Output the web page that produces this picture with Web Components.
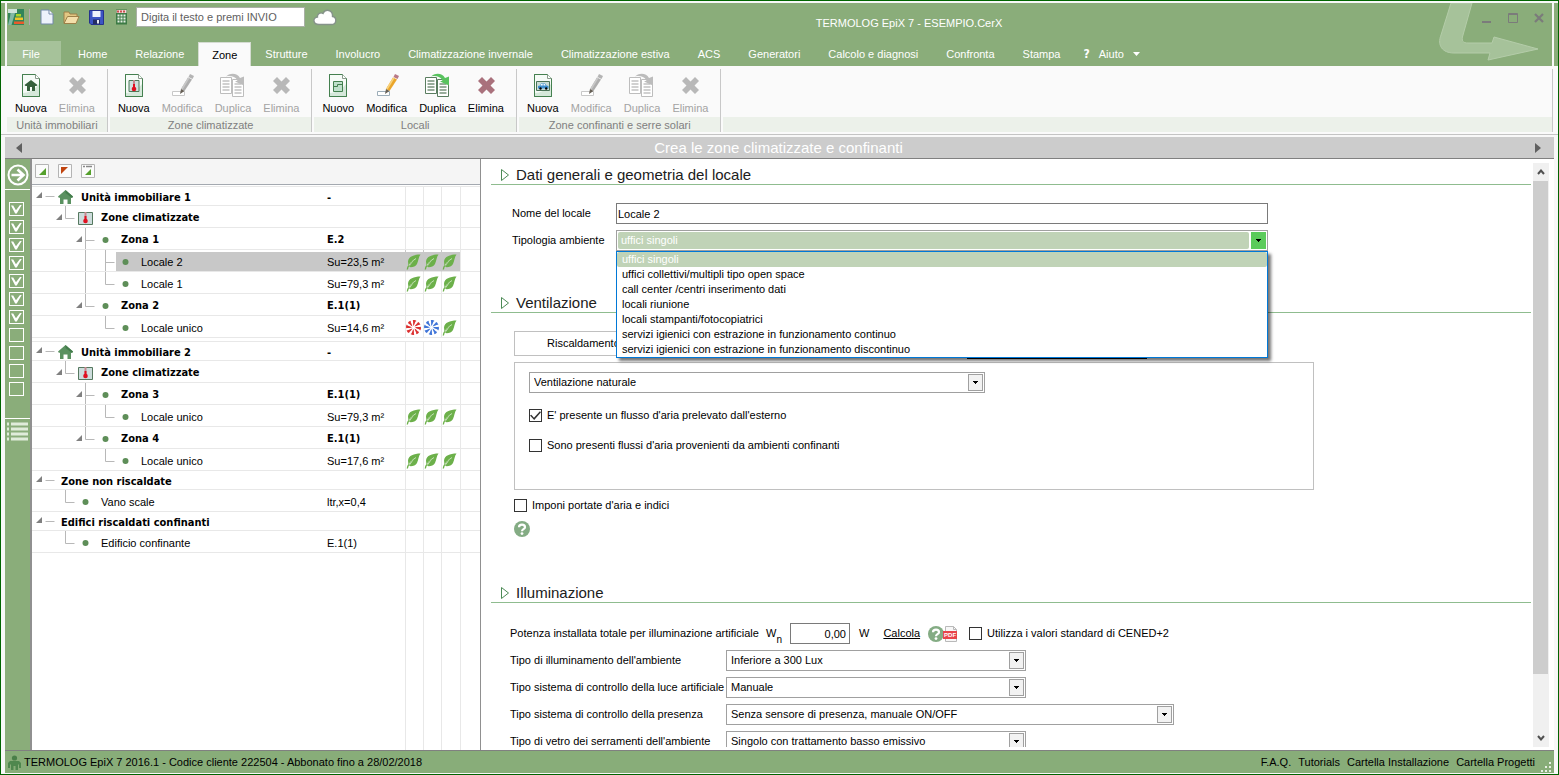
<!DOCTYPE html>
<html lang="it">
<head>
<meta charset="utf-8">
<title>TERMOLOG EpiX 7 - ESEMPIO.CerX</title>
<style>
  html, body { margin: 0; height: 100%; }
  body {
    font: 11px/15px "Liberation Sans", Arial, sans-serif;
    color: #000; background: #fff; overflow: hidden;
    --green: #8aad7a; --green-light: #a6c29a; --rule: #8fbc8f; --select: #c0d3b7;
    --strong: "DejaVu Sans Condensed", "DejaVu Sans", sans-serif;
  }
</style>
</head>
<body>
<app-window>
  <title-bar slot="title" caption="TERMOLOG EpiX 7 - ESEMPIO.CerX"></title-bar>
  <menu-tabs slot="tabs"></menu-tabs>
  <ribbon-bar slot="ribbon">
    <ribbon-group label="Unità immobiliari">
      <ribbon-button icon="doc-house">Nuova</ribbon-button>
      <ribbon-button icon="cross" disabled>Elimina</ribbon-button>
    </ribbon-group>
    <ribbon-group label="Zone climatizzate">
      <ribbon-button icon="doc-thermo">Nuova</ribbon-button>
      <ribbon-button icon="pencil" disabled>Modifica</ribbon-button>
      <ribbon-button icon="duplicate" disabled>Duplica</ribbon-button>
      <ribbon-button icon="cross" disabled>Elimina</ribbon-button>
    </ribbon-group>
    <ribbon-group label="Locali">
      <ribbon-button icon="doc-room">Nuovo</ribbon-button>
      <ribbon-button icon="pencil">Modifica</ribbon-button>
      <ribbon-button icon="duplicate">Duplica</ribbon-button>
      <ribbon-button icon="cross">Elimina</ribbon-button>
    </ribbon-group>
    <ribbon-group label="Zone confinanti e serre solari">
      <ribbon-button icon="doc-car">Nuova</ribbon-button>
      <ribbon-button icon="pencil" disabled>Modifica</ribbon-button>
      <ribbon-button icon="duplicate" disabled>Duplica</ribbon-button>
      <ribbon-button icon="cross" disabled>Elimina</ribbon-button>
    </ribbon-group>
    <ribbon-group label="" fill></ribbon-group>
  </ribbon-bar>
  <page-banner slot="banner">Crea le zone climatizzate e confinanti</page-banner>
  <step-rail slot="rail" total="11" done="7"></step-rail>
  <tree-panel slot="tree">
    <tree-row level="0" node="house" open strong value="-">Unità immobiliare 1</tree-row>
    <tree-row level="1" node="thermo" open strong>Zone climatizzate</tree-row>
    <tree-row level="2" node="dot" open strong more value="E.2">Zona 1</tree-row>
    <tree-row level="3" node="dot" through="2" more selected value="Su=23,5 m²" marks="leaf leaf leaf">Locale 2</tree-row>
    <tree-row level="3" node="dot" through="2" value="Su=79,3 m²" marks="leaf leaf leaf">Locale 1</tree-row>
    <tree-row level="2" node="dot" open strong value="E.1(1)">Zona 2</tree-row>
    <tree-row level="3" node="dot" value="Su=14,6 m²" marks="fan-red fan-blue leaf">Locale unico</tree-row>
    <tree-row level="0" node="house" open strong spaced value="-">Unità immobiliare 2</tree-row>
    <tree-row level="1" node="thermo" open strong>Zone climatizzate</tree-row>
    <tree-row level="2" node="dot" open strong more value="E.1(1)">Zona 3</tree-row>
    <tree-row level="3" node="dot" through="2" value="Su=79,3 m²" marks="leaf leaf leaf">Locale unico</tree-row>
    <tree-row level="2" node="dot" open strong value="E.1(1)">Zona 4</tree-row>
    <tree-row level="3" node="dot" value="Su=17,6 m²" marks="leaf leaf leaf">Locale unico</tree-row>
    <tree-row level="0" open strong>Zone non riscaldate</tree-row>
    <tree-row level="1" node="dot" value="ltr,x=0,4">Vano scale</tree-row>
    <tree-row level="0" open strong>Edifici riscaldati confinanti</tree-row>
    <tree-row level="1" node="dot" value="E.1(1)">Edificio confinante</tree-row>
    <tree-row filler></tree-row>
  </tree-panel>
  <room-form slot="form"></room-form>
  <status-bar slot="status">TERMOLOG EpiX 7 2016.1 - Codice cliente 222504 - Abbonato fino a 28/02/2018</status-bar>
</app-window>

<script>
const BASE = `<style>
  *, *::before, *::after { box-sizing: border-box; }
  :host { box-sizing: border-box; }
  button, input, select { font: inherit; color: inherit; margin: 0; border-radius: 0; }
  button { background: none; border: 0; padding: 0; }
  svg { display: block; }
</style>`;

function element(name, render) {
  customElements.define(name, class extends HTMLElement {
    connectedCallback() {
      if (this.shadowRoot) return;
      this.attachShadow({ mode: 'open' }).innerHTML = BASE + render(this);
    }
  });
}

const DOC = '<path d="M3.5 1.5h13l4 4v18h-17z" fill="#f6fbf7" stroke="#44804f"/><path d="M3.5 20c6 0 12-3 16.500-9v12h-16z" fill="#d5e8da"/><path d="M3.500 1.500h13l4 4v18h-17z" fill="none" stroke="#44804f"/><path d="M16.500 1.500v4h4" fill="#fff" stroke="#8a9a8c"/>';
const THERMO = '<path d="M-1-5h2v7h-2z" fill="#c58a90"/><path d="M-1-1h2v4h-2z" fill="#e01020"/><circle cy="4" r="2.300" fill="#e01020"/>';
const duplicate = (e, l, a) => `<path d="M.5 4.500h11v16h-11z" fill="#fff" stroke="${e}"/><path d="M12.500 6.500h11v17h-11z" fill="#fff" stroke="${e}"/><path d="M2.500 8h7M2.500 11h7M2.500 14h7M2.500 17h7M14.500 11h7M14.500 14h7M14.500 17h7M14.500 20h7" stroke="${l}" stroke-width="1.500"/><path d="M6 3.500C9 0 17-1 20 5l4-1.500v9l-9-4 2.500-1C15 3 10 2.500 6 3.500z" fill="${a}"/>`;
const pencil = (b, w, t, bx) => `<path d="M2.500 18.500h12v4h-12z" fill="#fff" stroke="${bx}"/><path d="M20 1l4 2-1.500 3-4-2z" fill="${t}"/><path d="M18 4.500l4 2L14.500 18l-3.500-2z" fill="${b}"/><path d="M18 4.500l1.500.8-7 11.500-1.500-.8z" fill="${w}"/><path d="M11 16l3.500 2-4.500 3z" fill="#665f55"/>`;
const cross = c => `<path d="M4 8l4-4 4.500 4.500L17 4l4 4-4.500 4.500L21 17l-4 4-4.500-4.500L8 21l-4-4 4.500-4.500z" fill="${c}"/>`;
const fan = c => '<g transform="translate(7.500 7.500)">' + [0,45,90,135,180,225,270,315].map(a => `<path transform="rotate(${a})" d="M0-1.500C-.8-3.500 0-5-.7-7.200.8-7.800 2.300-7.300 3-6.600 1.300-6.200 1.700-4 0-1.500z" fill="${c}"/>`).join('') + '</g>';
const HELP = '<circle cx="8" cy="8" r="8" fill="#84ac84"/><path d="M5 6.200C5 2.700 11 2.700 11 6.200c0 2-3 2-3 4" fill="none" stroke="#fff" stroke-width="2.200"/><circle cx="8" cy="12.600" r="1.400" fill="#fff"/>';
const HOUSE = '<path d="M7.500 0L15 6.500l-1 1.500-1-.6V14H9.500V9.500h-4V14H2V7.400L1 8 0 6.500z" fill="#5a9160"/><path d="M7.500 0L15 6.500l-1 1.500-6.500-5z" fill="#437c4b"/>';

const ICONS = {
  'doc-house': [24, 25, DOC + '<path d="M12 7l6.500 5-1 1H16v5h-3v-4h-2v4H8v-5H6.500l-1-1z" fill="#355f3b"/>'],
  'doc-thermo': [24, 25, DOC + '<path d="M7 7.500h10v11H7z" fill="#cfe0df" stroke="#4d7a58"/><g transform="translate(12 12)">' + THERMO + '</g>'],
  'doc-room': [24, 25, DOC + '<path d="M7.500 8.500h9v10h-9z" fill="#bfe0cb" stroke="#44804f"/><path d="M7.500 13.500h4v-2h5" fill="none" stroke="#44804f"/>'],
  'doc-car': [24, 25, DOC + '<path d="M5.500 8.500h13v9h-13z" fill="#c9dcd6" stroke="#4a7257"/><path d="M7 13l2-.5 1-2h4l1.500 2 2 .5v2.500H7z" fill="#3e8fd0"/><path d="M10.200 11h1.500v1.500H9.500zM12.500 11h1.200l1 1.500h-2.200z" fill="#fff"/><circle cx="9.500" cy="15.500" r="1.200"/><circle cx="15.200" cy="15.500" r="1.200"/>'],
  'pencil': [24, 25, pencil('#eaa52a', '#f8d27c', '#b97986', '#9cadb8')],
  'pencil-off': [24, 25, pencil('#aeaeae', '#c8c8c8', '#b4b4b4', '#c8c8c8')],
  'duplicate': [26, 25, duplicate('#5a7d60', '#78927c', '#58c25e')],
  'duplicate-off': [26, 25, duplicate('#bdbdbd', '#c2c2c2', '#bcbcbc')],
  'cross': [24, 25, cross('#a9717c')],
  'cross-off': [24, 25, cross('#b8b8b8')],
  'house': [15, 14, HOUSE],
  'thermo': [15, 14, '<path d="M.5 1.500h14v12H.5z" fill="#cddcdc" stroke="#55785f"/><g transform="translate(7.500 6)">' + THERMO + '</g>'],
  'dot': [15, 14, '<circle cx="7.500" cy="7" r="3" fill="#5e8e58"/>'],
  'leaf': [15, 16, '<path d="M14.500.5C8 .5 2.500 2.500 2 7.500c0 1.600.3 3 .9 4.200L8.500 5.500 3 13c2.500.5 6.500 0 8-3C12.500 7 12.500 3 14.500.5z" fill="#6cb04a"/><path d="M9 5.500C5 8 2 11 1.300 15.500" fill="none" stroke="#6cb04a" stroke-width="1.300"/><path d="M10 4.500C7 6.500 4.500 8.500 3 11.500" fill="none" stroke="#e8f4e2" stroke-width=".7"/>'],
  'fan-red': [15, 15, fan('#dc2f2f')],
  'fan-blue': [15, 15, fan('#3f74d8')],
  'help': [16, 16, HELP],
  'brand': [16, 16, '<path d="M0 0h16v16H0z" fill="#338559"/><path d="M0 0h9v4H0z" fill="#cfe3da"/><path d="M2.500 4H7L3.500 16H0l2-8z" fill="#83b9a5"/><path d="M8 5h5v2.500H8z" fill="#a8d52a"/><path d="M7 8.500h8v2.500H7z" fill="#f2c428"/><path d="M6 12.500h10V15H6z" fill="#ea5a2c"/>'],
  'new': [14, 16, '<path d="M1 1h8l4 4v10H1z" fill="#edf2fb" stroke="#7289a8"/><path d="M9 1v4h4" fill="#fff" stroke="#7289a8"/>'],
  'folder': [17, 15, '<path d="M1 13V2h5l1 2h7v3" fill="#e2c783" stroke="#9d8048"/><path d="M1 13.500L4.500 6.500H16l-3 7z" fill="#f3dfaa" stroke="#9d8048"/>'],
  'save': [15, 15, '<path d="M.5.5h14v14H2l-1.500-1.500z" fill="#3c55c4" stroke="#26338c"/><path d="M3.500 1h8v6h-8z" fill="#eef2fc"/><path d="M4 9.500h7V14H4z" fill="#232d63"/><path d="M8 10h2v3.500H8z" fill="#e8ebf5"/>'],
  'calc': [13, 16, '<path d="M1 .5h11v15H1z" fill="#3d7b45"/><path d="M1.500 1h10v3h-10z" fill="#f2dada"/><path d="M3 1.500v2M6 1.500v2M9 1.500v2" stroke="#bf2222" stroke-width="1.500"/><path d="M2.500 6.500h8M2.500 9.500h8M2.500 12.500h8" stroke="#e5f0e5" stroke-width="2" stroke-dasharray="2 1"/>'],
  'cloud': [24, 17, '<path d="M6 15.500C-.5 15.500-.5 8.500 4.500 8 4 4.500 8 3 10 4.500 12-.5 20 .5 19.500 7.500c4.500.5 4.500 8-1 8z" fill="#fff" stroke="#86938a" stroke-width="1.400"/>'],
  'go': [22, 22, '<circle cx="11" cy="11" r="9.500" fill="none" stroke="#fff" stroke-width="2"/><path d="M4.500 11h12M10.500 5.500L16.500 11l-6 5.500" fill="none" stroke="#fff" stroke-width="2.600"/>'],
  'list': [21, 19, '<path d="M0 2h2M4 2h17M0 7h2M4 7h17M0 12h2M4 12h17M0 17h2M4 17h17" stroke="#e0ecda" stroke-width="3"/>'],
  'expand-all': [14, 14, '<path d="M.5.500h13v13H.5z" fill="#fbfbfb" stroke="#b4b4b4"/><path d="M11 4v7H4z" fill="#55a02c"/>'],
  'collapse-all': [14, 14, '<path d="M.5.500h13v13H.5z" fill="#fbfbfb" stroke="#b4b4b4"/><path d="M3 3h7l-7 7z" fill="#c1440f"/>'],
  'expand-some': [14, 14, '<path d="M.5.500h13v13H.5z" fill="#fbfbfb" stroke="#b4b4b4"/><path d="M2 2.500h2M5 2.500h6" stroke="#888" stroke-width="1.500"/><path d="M10 5v6H4z" fill="#55a02c"/>'],
  'user': [15, 15, '<circle cx="7.500" cy="3" r="2.600" fill="#4a7f49"/><path d="M1 13V8l2-2h9l2 2v5h-2V9.500h-1V15H8.500v-4h-2v4H4V9.500H3V13z" fill="#4f874e"/>'],
  'pdf': [12, 16, '<path d="M.5.5h8l3 3v12H.5z" fill="#f7f7f7" stroke="#b9b9b9"/><path d="M8.500.5v3h3" fill="none" stroke="#b9b9b9"/>'],
};

element('ui-icon', el => {
  const [w, h, art] = ICONS[el.getAttribute('name')];
  return `<style>:host{display:block;flex:none;width:${w}px;height:${h}px}</style>
  <svg width="${w}" height="${h}" viewBox="0 0 ${w} ${h}" aria-hidden="true">${art}</svg>`;
});

element('app-window', () => `<style>
  :host { display: flex; flex-direction: column; height: 100vh; border: 1px solid #006400; padding: 2px 0 1px; background: #f8f8f8; }
  header { border: solid var(--green); border-width: 0 4px; }
  .head { position: relative; margin: 0 2px; background: var(--green); }
  .swoosh { position: absolute; right: 12px; top: 0; }
  .head ::slotted(*) { position: relative; }
  .body { display: flex; flex: 1; min-height: 0; margin: 0 4px; background: #fff; }
  slot[name=banner]::slotted(*), slot[name=status]::slotted(*) { margin: 0 4px; }
</style>
<header><div class="head">
  <svg class="swoosh" width="102" height="60" viewBox="0 0 102 60" aria-hidden="true"><path d="M13 0h21L25 32c-2 6 0 8 5 8h24l2-6 44 12-50 11 2-7H16C4 50-1 42 3 32z" fill="var(--green-light)" stroke="#b4cca9"/></svg>
  <slot name="title"></slot><slot name="tabs"></slot>
</div></header>
<slot name="ribbon"></slot><slot name="banner"></slot>
<div class="body"><slot name="rail"></slot><slot name="tree"></slot><slot name="form"></slot></div>
<slot name="status"></slot>`);

element('title-bar', el => `<style>
  :host { display: flex; height: 38px; color: #fff; }
  .quick { display: flex; align-items: center; height: 28px; padding-left: 1px; }
  .quick button { width: 25px; display: flex; justify-content: center; }
  .sep { width: 1px; height: 16px; background: #b7a9ae; margin: 0 4px 0 5px; }
  input { width: 169px; height: 20px; border: 1px solid #a9b0a5; background: #fff; padding: 0 4px; margin: 0 8px 0 2px; }
  input::placeholder { color: #606060; opacity: 1; }
  .caption { flex: 1; text-align: center; line-height: 40px; }
  .win { display: flex; align-items: flex-start; gap: 14px; padding: 9px 7px 0 0; }
</style>
<div class="quick"><ui-icon name="brand"></ui-icon><span class="sep"></span>
  <button aria-label="Nuovo"><ui-icon name="new"></ui-icon></button>
  <button aria-label="Apri"><ui-icon name="folder"></ui-icon></button>
  <button aria-label="Salva"><ui-icon name="save"></ui-icon></button>
  <button aria-label="Calcola"><ui-icon name="calc"></ui-icon></button>
  <input type="text" aria-label="Cerca" placeholder="Digita il testo e premi INVIO"><ui-icon name="cloud"></ui-icon></div>
<div class="caption">${el.getAttribute('caption')}</div>
<div class="win">
  <button aria-label="Riduci"><svg width="12" height="12"><path d="M1 10h9" stroke="#7b7b7b" stroke-width="2"/></svg></button>
  <button aria-label="Ingrandisci"><svg width="12" height="12"><path d="M1.500 1.500h9v9h-9zM1 2.500h10" stroke="#7b7b7b" fill="none"/></svg></button>
  <button aria-label="Chiudi"><svg width="12" height="12"><path d="M2 2l8 8M10 2l-8 8" stroke="#7b7b7b" stroke-width="2.200"/></svg></button>
</div>`);

element('menu-tabs', () => {
  const tabs = ['Home', 'Relazione', 'Zone', 'Strutture', 'Involucro', 'Climatizzazione invernale', 'Climatizzazione estiva', 'ACS', 'Generatori', 'Calcolo e diagnosi', 'Confronta', 'Stampa'];
  return `<style>
  :host { display: block; color: #fff; }
  nav { display: flex; height: 25px; }
  button { padding: 0 14px; line-height: 26px; white-space: nowrap; }
  .file { width: 54px; height: 24px; margin-right: 3px; padding: 0 10px 0 4px; background: var(--green-light); }
  .on { margin: 1px 0 0; padding: 0 13px; background: #fafafa; border: 1px solid #d5dcd2; border-bottom: 0; color: #000; line-height: 24px; }
  .help { display: flex; align-items: center; gap: 9px; padding: 0 9px; }
  .help b { font: bold 12px/26px var(--strong); }
</style>
<nav><button class="file">File</button>${tabs.map(t => `<button${t === 'Zone' ? ' class="on"' : ''}>${t}</button>`).join('')}
<button class="help"><b>?</b><span>Aiuto</span><svg width="7" height="4"><path d="M0 0h7L3.500 4z" fill="#fff"/></svg></button></nav>`;
});

element('ribbon-bar', () => `<style>
  :host { display: flex; padding: 0 5px 2px 6px; margin-bottom: 2px; background: #fafafa; border-bottom: 1px solid #c4c4c4; gap: 2px; }
</style><slot></slot>`);

element('ribbon-group', el => `<style>
  :host { display: flex; flex-direction: column; position: relative; padding-right: 1px; background: linear-gradient(#c8c8c8, #c8c8c8) right 3px / 1px 63px no-repeat; }
  :host([fill]) { flex: 1; }
  .tools { display: flex; height: 51px; padding: 0 6px 0 2px; }
  .label { height: 15px; line-height: 16px; text-align: center; color: #808080; background: #ecf1ea; }
</style><div class="tools"><slot></slot></div><div class="label">${el.getAttribute('label')}</div>`);

element('ribbon-button', el => {
  const off = el.hasAttribute('disabled');
  return `<style>
  :host { display: block; }
  button { display: flex; flex-direction: column; align-items: center; gap: 3px; padding: 7px 6px 0; white-space: nowrap; }
  button:disabled { color: #a3a3a3; }
</style><button${off ? ' disabled' : ''}><ui-icon name="${el.getAttribute('icon')}${off ? '-off' : ''}"></ui-icon><span><slot></slot></span></button>`;
});

element('page-banner', () => `<style>
  :host { display: flex; align-items: center; height: 22px; flex: none; padding: 0 13px 0 11px; background: #ccc; border-bottom: 1px solid #808080; color: #fff; font-size: 15px; line-height: 20px; }
  .text { flex: 1; text-align: center; }
</style><button aria-label="Precedente"><svg width="6" height="10"><path d="M6 0v10L0 5z" fill="#606060"/></svg></button>
<span class="text"><slot></slot></span>
<button aria-label="Successivo"><svg width="6" height="10"><path d="M0 0v10l6-5z" fill="#606060"/></svg></button>`);

element('step-rail', el => {
  const total = +el.getAttribute('total'), done = +el.getAttribute('done');
  let boxes = '';
  for (let i = 1; i <= total; i++) boxes += `<input type="checkbox" aria-label="Passo ${i}"${i <= done ? ' checked' : ''}>`;
  return `<style>
  :host { display: flex; flex-direction: column; flex: none; width: 25px; background: var(--green); }
  .top { display: flex; justify-content: center; padding: 5px 0 3px 0; border-bottom: 1px solid #fff; }
  .steps { display: flex; flex-direction: column; gap: 4px; padding: 12px 0 22px 4px; border-bottom: 1px solid #fff; }
  input { appearance: none; width: 15px; height: 14px; border: 1px solid #fff; display: grid; place-items: center; }
  input:checked::before { content: ""; width: 11px; height: 9px; background: #fff; clip-path: polygon(0 10%, 20% 10%, 45% 65%, 85% 0, 100% 0, 52% 100%, 38% 100%); }
  .list { padding: 3px 2px; }
</style><button class="top" aria-label="Avanti"><ui-icon name="go"></ui-icon></button>
<div class="steps">${boxes}</div><button class="list" aria-label="Elenco"><ui-icon name="list"></ui-icon></button>`;
});

element('tree-panel', () => `<style>
  :host { display: flex; flex-direction: column; flex: none; width: 451px; border: solid #909090; border-width: 0 1px 0 2px; }
  .tools { display: flex; align-items: flex-start; gap: 9px; padding: 5px 3px; height: 26px; background: #f5f5f5; border-bottom: 1px solid #a4a9b0; }
  .rows { display: flex; flex-direction: column; flex: 1; min-height: 0; padding-top: 2px; background: linear-gradient(#e8e8e8, #e8e8e8) 0 1px / 100% 1px no-repeat; }
</style>
<div class="tools"><button aria-label="Espandi tutto"><ui-icon name="expand-all"></ui-icon></button>
<button aria-label="Comprimi tutto"><ui-icon name="collapse-all"></ui-icon></button>
<button aria-label="Espandi zone"><ui-icon name="expand-some"></ui-icon></button></div>
<div class="rows" role="tree"><slot></slot></div>`);

element('tree-row', el => {
  const level = +el.getAttribute('level'), node = el.getAttribute('node');
  const h = level ? 22 : 19, mid = level ? 12 : 9;
  const width = (node ? 49 : 29) + 20 * level;
  const x = 13.5 + 20 * level;
  let art = '';
  if (!el.hasAttribute('filler')) {
    if (level) art += `M${x} 0V${el.hasAttribute('more') ? h : mid + .5}`;
    if (el.hasAttribute('through')) art += `M${x - 20} 0V${h}`;
    art += `M${x} ${mid + .5}h9`;
  }
  const arrow = el.hasAttribute('open') ? `<path d="M${4 + 20 * level} ${mid + 2}h6v-6z" fill="#808080"/>` : '';
  const marks = (el.getAttribute('marks') || '').split(' ');
  const cell = m => `<span class="mark">${m ? `<ui-icon name="${m}"></ui-icon>` : ''}</span>`;
  return `<style>
  :host { display: grid; flex: none; grid-template: 100% / minmax(0, 1fr) 78px 18px 18px 19px 20px; height: ${h}px; }
  :host([spaced]) { height: 23px; padding-top: 4px; background: linear-gradient(#e8e8e8, #e8e8e8) 0 3px / 100% 1px no-repeat; }
  :host([filler]) { flex: 1; height: auto; }
  :host([strong]) { font-weight: bold; font-family: var(--strong); }
  .name { display: flex; white-space: nowrap; overflow: hidden; }
  .gutter { position: relative; flex: none; width: ${width}px; }
  .gutter ui-icon { position: absolute; right: 8px; top: ${level ? 5 : 3}px; }
  .name b, .value { font-weight: inherit; line-height: ${level ? 24 : 21}px; white-space: nowrap; }
  .name b { flex: 1; }
  .mark, .end { border-left: 1px solid #e8e8e8; }
  .mark { display: flex; align-items: center; padding-top: 2px; }
  span.value, span.mark, span.name, span.end { border-bottom: ${el.hasAttribute('filler') ? 0 : 1}px solid #e8e8e8; }
  :host([selected]) .value, :host([selected]) .mark { background: linear-gradient(#c8c8c8, #c8c8c8) 0 2px no-repeat; border-left-color: #c8c8c8; }
  :host([selected]) .name { background: linear-gradient(#c8c8c8, #c8c8c8) 84px 2px no-repeat; }
</style>
<span class="name"><span class="gutter"><svg width="${width}" height="${h}" aria-hidden="true"><path d="${art}" fill="none" stroke="#b8b8b8"/>${arrow}</svg>${node ? `<ui-icon name="${node}"></ui-icon>` : ''}</span><b><slot></slot></b></span>
<span class="value">${el.getAttribute('value') || ''}</span>${cell(marks[0])}${cell(marks[1])}${cell(marks[2])}<span class="end"></span>`;
});

element('form-heading', () => `<style>
  :host { display: flex; align-items: center; gap: 7px; height: 20px; padding-left: 10px; border-bottom: 1px solid var(--rule); }
  h2 { margin: 0; font: inherit; font-size: 15px; line-height: 20px; color: #202020; }
</style><svg width="8" height="12" aria-hidden="true"><path d="M.5.500v11L7.500 6z" fill="#fff" stroke="#4c8a55"/></svg><h2><slot></slot></h2>`);

element('text-field', el => `<style>
  :host { display: flex; align-items: center; height: 21px; }
  label { flex: none; width: var(--label, auto); white-space: nowrap; }
  input { flex: 1; min-width: 0; height: 21px; border: 1px solid #7a7a7a; background: #fff; padding: 0 1px; }
  :host([numeric]) input { padding-right: 3px; text-align: right; }
  sub { font-size: 10px; line-height: 0; vertical-align: -6px; }
</style><label for="f">${el.getAttribute('label')}${el.hasAttribute('sub') ? `<sub>${el.getAttribute('sub')}</sub>` : ''}</label><input id="f" type="text" value="${el.getAttribute('value')}">`);

element('combo-field', el => {
  const items = el.getAttribute('options').split('|'), open = el.hasAttribute('open');
  return `<style>
  :host { display: flex; align-items: center; height: 21px; }
  label { flex: none; width: var(--label, auto); white-space: nowrap; }
  .box { position: relative; display: flex; flex: 1; min-width: 0; gap: 2px; height: 21px; border: 1px solid #a0a0a0; padding: 1px; background: #fff; }
  select { appearance: none; flex: 1; min-width: 0; border: 0; outline: 0; padding: 0 3px; background: #fff; line-height: 15px; }
  .arrow { display: grid; place-items: center; flex: none; width: 15px; background: #f2f2f2; border: 1px solid #a0a0a0; }
  :host([open]) select { background: var(--select); color: #fff; border-radius: 2px; }
  :host([open]) .arrow { background: #5bcb5b; border-color: #5bcb5b; }
  ul { position: absolute; z-index: 5; top: 20px; left: -1px; right: -1px; margin: 0; padding: 0; list-style: none; background: #fff; border: 1px solid #0078d7; box-shadow: 3px 3px 3px rgba(0,0,0,.55); }
  li { height: 15px; padding-left: 5px; white-space: nowrap; }
  li[aria-selected=true] { background: var(--select); color: #fff; border-radius: 2px; }
</style>${el.hasAttribute('label') ? `<label for="f">${el.getAttribute('label')}</label>` : ''}
<div class="box"><select id="f"${el.hasAttribute('label') ? '' : ' aria-label="Tipo di ventilazione"'}>${items.map(i => `<option>${i}</option>`).join('')}</select>
<span class="arrow"><svg width="5" height="3" shape-rendering="crispEdges" aria-hidden="true"><path d="M0 0h5v1H4v1H3v1H2V2H1V1H0z"/></svg></span>
${open ? `<ul role="listbox">${items.map((i, n) => `<li role="option" aria-selected="${n === 0}">${i}</li>`).join('')}</ul>` : ''}</div>`;
});

element('check-field', el => `<style>
  :host { display: flex; }
  label { display: flex; align-items: center; gap: 5px; height: 15px; white-space: nowrap; }
  input { appearance: none; flex: none; width: 13px; height: 13px; border: 1px solid #333; background: #fff; display: grid; place-items: center; }
  input:checked::before { content: ""; width: 11px; height: 9px; background: #333; clip-path: polygon(0 50%, 12% 42%, 36% 74%, 90% 4%, 100% 14%, 38% 100%); }
</style><label><input type="checkbox"${el.hasAttribute('checked') ? ' checked' : ''}><span><slot></slot></span></label>`);

element('scroll-rail', () => `<style>
  :host { display: flex; flex-direction: column; flex: none; width: 16px; background: #f0f0f0; }
  button { height: 18px; flex: none; display: grid; place-items: center; }
  .track { flex: 1; min-height: 0; } .thumb { width: 15px; height: 90%; background: #cdcdcd; }
</style><button aria-label="Su"><svg width="8" height="6"><path d="M1 5l3-3.500L7 5" fill="none" stroke="#505050" stroke-width="2"/></svg></button>
<div class="track"><div class="thumb"></div></div>
<button aria-label="Giù"><svg width="8" height="6"><path d="M1 1l3 3.500L7 1" fill="none" stroke="#505050" stroke-width="2"/></svg></button>`);

element('room-form', () => `<style>
  :host { display: flex; flex: 1; min-width: 0; padding: 4px 5px 3px 10px; gap: 2px; }
  .content { flex: 1; min-width: 0; overflow: hidden; padding-top: 2px; }
  section { display: flex; flex-direction: column; }
  .general { --label: 104px; gap: 6px; max-width: 777px; padding: 18px 0 42px 21px; }
  .air { padding: 18px 0 46px 23px; max-width: 823px; }
  .tabs { display: flex; align-items: flex-start; height: 28px; margin-bottom: 3px; }
  .tabs button { width: 453px; height: 25px; padding-left: 32px; text-align: left; border: 1px solid #c0c0c0; }
  .tabs i { width: 180px; align-self: flex-end; border-bottom: 1px solid #000; }
  .panel { display: flex; flex-direction: column; gap: 15px; padding: 9px 14px 36px; border: 1px solid #c0c0c0; margin-bottom: 8px; }
  .panel combo-field { max-width: 456px; }
  .air > ui-icon { margin-top: 8px; }
  .light { --label: 216px; gap: 6px; padding: 20px 0 0 19px; }
  .line { display: flex; align-items: center; height: 21px; white-space: nowrap; }
  .line .lead { width: 256px; }
  .line text-field { --label: 24px; width: 84px; margin-right: 9px; }
  .line a { color: inherit; margin: 0 8px 0 14px; }
  .pdf { display: flex; margin-right: 12px; height: 16px; }
  .badge { position: relative; margin-left: 1px; }
  .badge b { position: absolute; left: -2px; top: 5px; padding: 0 1px; background: #e8444a; color: #fff; font: bold 6px/8px "Liberation Sans", sans-serif; }
  .w300 { width: 516px; } .w448 { width: 664px; }
</style>
<div class="content">
  <form-heading>Dati generali e geometria del locale</form-heading>
  <section class="general">
    <text-field label="Nome del locale" value="Locale 2"></text-field>
    <combo-field open label="Tipologia ambiente" options="uffici singoli|uffici collettivi/multipli tipo open space|call center /centri inserimento dati|locali riunione|locali stampanti/fotocopiatrici|servizi igienici con estrazione in funzionamento continuo|servizi igienici con estrazione in funzionamento discontinuo"></combo-field>
  </section>
  <form-heading>Ventilazione</form-heading>
  <section class="air">
    <div class="tabs"><button>Riscaldamento</button><i></i></div>
    <div class="panel">
      <combo-field options="Ventilazione naturale"></combo-field>
      <check-field checked>E' presente un flusso d'aria prelevato dall'esterno</check-field>
      <check-field>Sono presenti flussi d'aria provenienti da ambienti confinanti</check-field>
    </div>
    <check-field>Imponi portate d'aria e indici</check-field>
    <ui-icon name="help"></ui-icon>
  </section>
  <form-heading>Illuminazione</form-heading>
  <section class="light">
    <div class="line"><span class="lead">Potenza installata totale per illuminazione artificiale</span>
      <text-field label="W" sub="n" value="0,00" numeric></text-field><span>W</span>
      <a href="#calcola">Calcola</a><span class="pdf"><ui-icon name="help"></ui-icon><span class="badge"><ui-icon name="pdf"></ui-icon><b>PDF</b></span></span>
      <check-field>Utilizza i valori standard di CENED+2</check-field></div>
    <combo-field class="w300" label="Tipo di illuminamento dell'ambiente" options="Inferiore a 300 Lux"></combo-field>
    <combo-field class="w300" label="Tipo sistema di controllo della luce artificiale" options="Manuale"></combo-field>
    <combo-field class="w448" label="Tipo sistema di controllo della presenza" options="Senza sensore di presenza, manuale ON/OFF"></combo-field>
    <combo-field class="w300" label="Tipo di vetro dei serramenti dell'ambiente" options="Singolo con trattamento basso emissivo"></combo-field>
  </section>
</div>
<scroll-rail></scroll-rail>`);

element('status-bar', () => `<style>
  :host { display: flex; align-items: center; flex: none; height: 23px; padding: 0 2px; border-top: 1px solid #808080; background: #88ad79; white-space: nowrap; }
  .msg { flex: 1; padding-left: 2px; }
  nav { display: flex; gap: 7px; margin-right: 6px; }
  a { color: inherit; text-decoration: none; }
  .grip { align-self: flex-end; }
</style><ui-icon name="user"></ui-icon><span class="msg"><slot></slot></span>
<nav><a href="#faq">F.A.Q.</a><a href="#tutorials">Tutorials</a><a href="#installazione">Cartella Installazione</a><a href="#progetti">Cartella Progetti</a></nav>
<svg class="grip" width="11" height="12" aria-hidden="true"><path d="M8 1h2v2H8zM4 5h2v2H4zM8 5h2v2H8zM0 9h2v2H0zM4 9h2v2H4zM8 9h2v2H8z" fill="#e6efe2"/></svg>`);
</script>
</body>
</html>
